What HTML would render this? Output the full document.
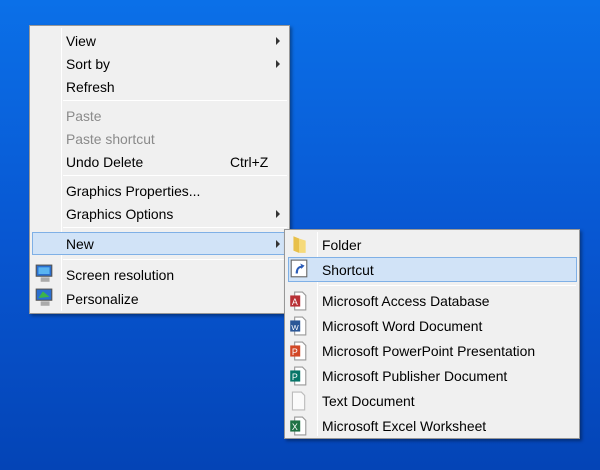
<!DOCTYPE html>
<html><head><meta charset="utf-8"><style>
*{margin:0;padding:0;box-sizing:border-box}
body{width:600px;height:470px;overflow:hidden;position:relative;background:linear-gradient(180deg,#0b70e8 0%,#0857d2 50%,#0444b6 100%);font-family:"Liberation Sans",sans-serif;font-size:13.9px;color:#000}
.menu{position:absolute;background:#f0f0f0;border:1px solid #979797;box-shadow:2px 2px 3px rgba(0,0,0,.35)}
.gut{position:absolute;top:2px;bottom:2px;width:1px;background:#e2e2e2;border-right:1px solid #fff}
.it{position:absolute;left:0;right:0;height:22px;line-height:22px}
.it span{position:absolute}
.dis{color:#8a8a8a}
.sep{position:absolute;height:1px;background:#d7d7d7;border-bottom:1px solid #fff}
.hl{position:absolute;background:#d1e3f7;border:1px solid #7fb0e6}
.arr{position:absolute;width:0;height:0;border-left:4px solid #333;border-top:4px solid transparent;border-bottom:4px solid transparent}
.ic{position:absolute;width:18px;height:20px}
</style></head><body>
<div class="menu" style="left:29px;top:25px;width:261px;height:289px">
 <div class="gut" style="left:31px"></div>
 <div class="hl" style="left:2px;top:206px;width:255px;height:23px"></div>
 <div class="it" style="top:4px"><span style="left:36px">View</span></div><div class="arr" style="left:246px;top:11px"></div>
 <div class="it" style="top:27px"><span style="left:36px">Sort by</span></div><div class="arr" style="left:246px;top:34px"></div>
 <div class="it" style="top:50px"><span style="left:36px">Refresh</span></div>
 <div class="sep" style="left:33px;right:2px;top:74px"></div>
 <div class="it dis" style="top:79px"><span style="left:36px">Paste</span></div>
 <div class="it dis" style="top:102px"><span style="left:36px">Paste shortcut</span></div>
 <div class="it" style="top:125px"><span style="left:36px">Undo Delete</span><span style="left:200px">Ctrl+Z</span></div>
 <div class="sep" style="left:33px;right:2px;top:149px"></div>
 <div class="it" style="top:154px"><span style="left:36px">Graphics Properties...</span></div>
 <div class="it" style="top:177px"><span style="left:36px">Graphics Options</span></div><div class="arr" style="left:246px;top:184px"></div>
 <div class="sep" style="left:33px;right:2px;top:201px"></div>
 <div class="it" style="top:207px"><span style="left:36px">New</span></div><div class="arr" style="left:246px;top:214px"></div>
 <div class="sep" style="left:33px;right:2px;top:233px"></div>
 <svg class="ic" style="left:5px;top:238px" viewBox="0 0 16 18"><rect x="1" y="1" width="14" height="10" fill="#2a6fd0" stroke="#555"/><rect x="3" y="3" width="10" height="6" fill="#5ab4f0"/><rect x="5" y="12" width="8" height="4" fill="#aaa"/></svg>
 <div class="it" style="top:238px"><span style="left:36px">Screen resolution</span></div>
 <svg class="ic" style="left:5px;top:262px" viewBox="0 0 16 18"><rect x="1" y="1" width="14" height="10" fill="#2a6fd0" stroke="#555"/><path d="M3 9 L7 3 L13 8Z" fill="#3cb44a"/><rect x="5" y="12" width="8" height="4" fill="#aaa"/></svg>
 <div class="it" style="top:262px"><span style="left:36px">Personalize</span></div>
</div>
<div class="menu" style="left:284px;top:229px;width:296px;height:210px">
 <div class="gut" style="left:32px"></div>
 <div class="hl" style="left:3px;top:27px;width:289px;height:25px"></div>
 <svg class="ic" style="left:5px;top:4px" viewBox="0 0 16 18"><path d="M3 2 L8 4 L8 17 L3 15Z" fill="#e8c04a"/><path d="M8 4 L14 6 L14 17 L8 17Z" fill="#f6da7a"/></svg>
 <div class="it" style="top:4px"><span style="left:37px">Folder</span></div>
 <svg class="ic" style="left:5px;top:29px" viewBox="0 0 16 18"><rect x="1" y="1" width="14" height="15" fill="#fff" stroke="#666"/><path d="M5 13 Q5 7 10 6 L9 4 L13 6 L10 9 L10 8 Q7 8 7 13Z" fill="#2b5cb8"/></svg>
 <div class="it" style="top:29px"><span style="left:37px">Shortcut</span></div>
 <div class="sep" style="left:34px;right:3px;top:55px"></div>
 <svg class="ic" style="left:4px;top:61px" viewBox="0 0 16 18"><path d="M5 1 H12 L15 4 V17 H5Z" fill="#fff" stroke="#999"/><rect x="1" y="4" width="9" height="10" fill="#b83035"/><text x="2.5" y="12.5" font-size="8" fill="#fff" font-family="Liberation Sans">A</text></svg>
 <div class="it" style="top:60px"><span style="left:37px">Microsoft Access Database</span></div>
 <svg class="ic" style="left:4px;top:86px" viewBox="0 0 16 18"><path d="M5 1 H12 L15 4 V17 H5Z" fill="#fff" stroke="#999"/><rect x="1" y="4" width="9" height="10" fill="#2b5797"/><text x="2" y="12.5" font-size="7" fill="#fff" font-family="Liberation Sans">W</text></svg>
 <div class="it" style="top:85px"><span style="left:37px">Microsoft Word Document</span></div>
 <svg class="ic" style="left:4px;top:111px" viewBox="0 0 16 18"><path d="M5 1 H12 L15 4 V17 H5Z" fill="#fff" stroke="#999"/><rect x="1" y="4" width="9" height="10" fill="#d24726"/><text x="2.5" y="12.5" font-size="8" fill="#fff" font-family="Liberation Sans">P</text></svg>
 <div class="it" style="top:110px"><span style="left:37px">Microsoft PowerPoint Presentation</span></div>
 <svg class="ic" style="left:4px;top:136px" viewBox="0 0 16 18"><path d="M5 1 H12 L15 4 V17 H5Z" fill="#fff" stroke="#999"/><rect x="1" y="4" width="9" height="10" fill="#077568"/><text x="2.5" y="12.5" font-size="8" fill="#fff" font-family="Liberation Sans">P</text></svg>
 <div class="it" style="top:135px"><span style="left:37px">Microsoft Publisher Document</span></div>
 <svg class="ic" style="left:4px;top:161px" viewBox="0 0 16 18"><path d="M3 1 H11 L14 4 V17 H3Z" fill="#fafafa" stroke="#bbb"/></svg>
 <div class="it" style="top:160px"><span style="left:37px">Text Document</span></div>
 <svg class="ic" style="left:4px;top:186px" viewBox="0 0 16 18"><path d="M5 1 H12 L15 4 V17 H5Z" fill="#fff" stroke="#999"/><rect x="1" y="4" width="9" height="10" fill="#1f7244"/><text x="2.5" y="12.5" font-size="8" fill="#fff" font-family="Liberation Sans">X</text></svg>
 <div class="it" style="top:185px"><span style="left:37px">Microsoft Excel Worksheet</span></div>
</div>
</body></html>
